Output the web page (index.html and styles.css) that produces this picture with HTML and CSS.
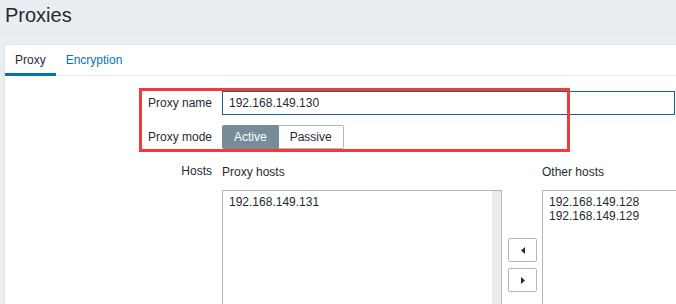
FILE: index.html
```html
<!DOCTYPE html>
<html lang="en">
<head>
  <meta charset="UTF-8" />
  <meta name="viewport" content="width=device-width, initial-scale=1.0" />
  <title>Proxies</title>
  <link rel="stylesheet" href="styles.css">
</head>
<body>
  <header class="page-header">
    <h1>Proxies</h1>
  </header>

  <div class="card">
    <ul class="tabs">
      <li class="tab active"><a href="#">Proxy</a></li>
      <li class="tab"><a href="#">Encryption</a></li>
    </ul>

    <form class="form-grid">
      <label class="form-label" for="proxy-name">Proxy name</label>
      <div class="form-field">
        <input class="text-input" id="proxy-name" type="text" value="192.168.149.130">
      </div>

      <div class="form-label">Proxy mode</div>
      <div class="form-field">
        <div class="radio-group">
          <span class="radio-btn selected">Active</span>
          <span class="radio-btn">Passive</span>
        </div>
      </div>

      <div class="form-label">Hosts</div>
      <div class="form-field">
        <div class="hosts-grid">
          <div class="list-title">Proxy hosts</div>
          <div></div>
          <div class="list-title">Other hosts</div>

          <div class="listbox">
            <ul class="list-items">
              <li>192.168.149.131</li>
            </ul>
            <div class="scroll-track"></div>
          </div>

          <div class="move-buttons">
            <button type="button" class="move-btn">
              <svg width="4" height="7" viewBox="0 0 4 7"><path d="M4 0 L0 3.5 L4 7 Z" /></svg>
            </button>
            <button type="button" class="move-btn">
              <svg width="4" height="7" viewBox="0 0 4 7"><path d="M0 0 L4 3.5 L0 7 Z" /></svg>
            </button>
          </div>

          <div class="listbox">
            <ul class="list-items">
              <li>192.168.149.128</li>
              <li>192.168.149.129</li>
            </ul>
          </div>
        </div>
      </div>
    </form>
  </div>

  <div class="highlight"></div>
</body>
</html>
```

FILE: styles.css
```css
:root {
  --bg-color: #ebeef0;
  --line-color: #dfe4e7;
  --text-color: #1f2c33;
  --link-color: #0275b8;
  --border-color: #acbbc2;
  --focus-color: #1a5f94;
  --selected-bg: #768d99;
  --mark-color: #f3393c;
}

body {
  background-color: var(--bg-color);
  color: var(--text-color);
  font-family: "Liberation Sans", Arial, sans-serif;
  font-size: 12px;
  margin: 0;
  padding: 0;
  overflow: hidden;
}

.page-header {
  height: 30px;
  padding: 3px 5px 0;
  border-bottom: 1px solid var(--line-color);
}

.page-header h1 {
  margin: 0;
  font-size: 20px;
  font-weight: normal;
  line-height: 24px;
}

.card {
  margin: 10px 0 0 4px;
  background-color: #fff;
  border-top: 1px solid var(--line-color);
  border-left: 1px solid var(--line-color);
  height: 400px;
}

.tabs {
  display: flex;
  list-style: none;
  margin: 0;
  padding: 0;
  height: 30px;
  border-bottom: 1px solid var(--bg-color);
}

.tab {
  margin-bottom: -1px;
}

.tab a {
  display: block;
  padding: 8px 10px 6px;
  line-height: 14px;
  border-bottom: 3px solid transparent;
  color: var(--link-color);
  text-decoration: none;
}

.tab.active a {
  color: var(--text-color);
  border-bottom-color: var(--link-color);
}

.form-grid {
  display: grid;
  grid-template-columns: 207px 1fr;
  column-gap: 10px;
  row-gap: 10px;
  padding-top: 15px;
}

.form-label {
  text-align: right;
  line-height: 24px;
}

.text-input {
  box-sizing: border-box;
  width: 453px;
  height: 24px;
  margin: 0;
  padding: 0 6px;
  border: 1px solid var(--focus-color);
  font-family: inherit;
  font-size: 12px;
  color: var(--text-color);
  outline: none;
}

.radio-group {
  display: flex;
}

.radio-btn {
  box-sizing: border-box;
  height: 24px;
  line-height: 22px;
  padding: 0 11px;
  border: 1px solid var(--border-color);
  background-color: #fff;
}

.radio-btn:first-child {
  border-radius: 2px 0 0 2px;
}

.radio-btn:last-child {
  border-left: none;
  border-radius: 0 2px 2px 0;
}

.radio-btn.selected {
  background-color: var(--selected-bg);
  border-color: var(--selected-bg);
  color: #fff;
}

.hosts-grid {
  display: grid;
  grid-template-columns: 280px 40px 280px;
}

.list-title {
  padding-top: 6px;
  line-height: 14px;
  margin-bottom: 11px;
}

.listbox {
  box-sizing: border-box;
  height: 150px;
  border: 1px solid var(--border-color);
  display: flex;
}

.list-items {
  flex: 1;
  list-style: none;
  margin: 0;
  padding: 4px 6px;
  line-height: 14px;
}

.scroll-track {
  width: 9px;
  background-color: #ebebeb;
}

.move-buttons {
  align-self: center;
  display: flex;
  flex-direction: column;
  gap: 6px;
  padding-left: 6px;
}

.move-btn {
  box-sizing: border-box;
  width: 29px;
  height: 24px;
  padding: 0;
  border: 1px solid var(--border-color);
  border-radius: 2px;
  background-color: #fff;
  display: flex;
  align-items: center;
  justify-content: center;
}

.move-btn svg {
  fill: var(--text-color);
}

.highlight {
  position: absolute;
  left: 139px;
  top: 88px;
  width: 431px;
  height: 64px;
  box-sizing: border-box;
  border: 3px solid var(--mark-color);
}
```
